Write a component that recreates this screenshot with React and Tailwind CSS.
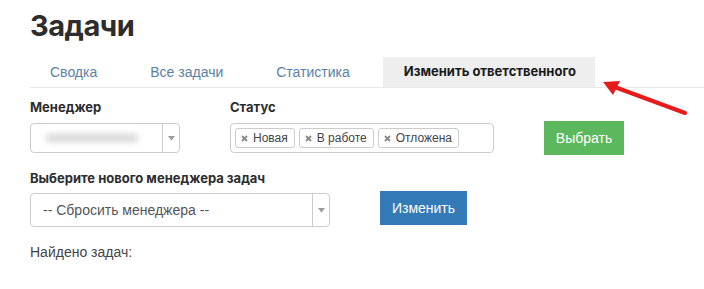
import React from "react";

function Caret() {
  return (
    <svg width="7" height="5" viewBox="0 0 7 5" className="block">
      <path d="M0 0 L7 0 L3.5 4.5 Z" fill="#999" />
    </svg>
  );
}

function Tag({ children }) {
  return (
    <div className="flex items-center h-[20px] pl-[5px] pr-[6px] border border-[#ccc] rounded-[3px] bg-white text-[12px] text-[#444]">
      <svg width="7" height="7" viewBox="0 0 7 7" className="mr-[5px]">
        <path d="M1 1 L6 6 M6 1 L1 6" stroke="#888" strokeWidth="1.8" />
      </svg>
      {children}
    </div>
  );
}

export default function App() {
  const tabs = ["Сводка", "Все задачи", "Статистика"];
  return (
    <div className="relative w-[704px] h-[289px] bg-white overflow-hidden font-['Liberation_Sans',Arial,sans-serif] text-[#333]">
      <div className="pl-[30px]">
        <h1 className="pt-[8px] text-[29px] leading-[36px] tracking-[-0.5px] font-bold text-[#2d2d2d] font-['Inter',sans-serif]">
          Задачи
        </h1>
        <div className="mt-[13px] flex gap-[13px] border-b border-[#e8e8e8]">
          {tabs.map((t) => (
            <div key={t} className="h-[30px] px-5 flex items-center text-[14px] text-[#5b80a5]">
              {t}
            </div>
          ))}
          <div className="h-[30px] pl-[21px] pr-[19px] flex items-center bg-[#eeeeee] text-[13px] font-bold text-[#1a1a1a] font-['Inter',sans-serif]">
            Изменить ответственного
          </div>
        </div>

        <div className="mt-[9px] grid grid-cols-[150px_264px_80px] gap-x-[50px] items-center">
          <div className="text-[13px] leading-[20px] font-bold text-[#2d2d2d] font-['Inter',sans-serif]">Менеджер</div>
          <div className="text-[13px] leading-[20px] font-bold text-[#2d2d2d] font-['Inter',sans-serif]">Статус</div>
          <div />
          <div className="mt-[4px] h-[30px] flex border border-[#ccc] rounded-[4px] bg-white">
            <div className="flex-1 flex items-center pl-[15px]">
              <div className="h-[8px] w-[92px] bg-[#d6d6d6] rounded-full blur-[3px]" />
            </div>
            <div className="w-[17px] border-l border-[#ccc] flex items-center justify-center">
              <Caret />
            </div>
          </div>
          <div className="mt-[4px] h-[30px] flex items-center gap-[4px] px-[4px] border border-[#ccc] rounded-[4px] bg-white">
            <Tag>Новая</Tag>
            <Tag>В работе</Tag>
            <Tag>Отложена</Tag>
          </div>
          <div className="mt-[4px] h-[34px] w-[80px] flex items-center justify-center bg-[#5cb85c] text-white text-[14px]">
            Выбрать
          </div>
        </div>

        <div className="mt-[14px] text-[13px] leading-[18px] font-bold text-[#2d2d2d] font-['Inter',sans-serif]">
          Выберите нового менеджера задач
        </div>
        <div className="flex items-start gap-[50px]">
          <div className="mt-[6px] w-[300px] h-[34px] flex border border-[#ccc] rounded-[4px] bg-white">
            <div className="flex-1 flex items-center pl-[12px] text-[14px] text-[#555]">
              -- Сбросить менеджера --
            </div>
            <div className="w-[17px] border-l border-[#ccc] flex items-center justify-center">
              <Caret />
            </div>
          </div>
          <div className="mt-[4px] h-[34px] w-[87px] flex items-center justify-center bg-[#337ab7] text-white text-[14px]">
            Изменить
          </div>
        </div>

        <div className="mt-[16px] text-[14px] leading-[18px] text-[#444]">Найдено задач:</div>
      </div>

      <svg className="absolute left-0 top-0 pointer-events-none" width="704" height="289">
        <line x1="685" y1="113" x2="612" y2="86" stroke="#e81b1b" strokeWidth="4" strokeLinecap="round" />
        <path d="M603 82 L620 81 L613 95 Z" fill="#e81b1b" />
      </svg>
    </div>
  );
}
